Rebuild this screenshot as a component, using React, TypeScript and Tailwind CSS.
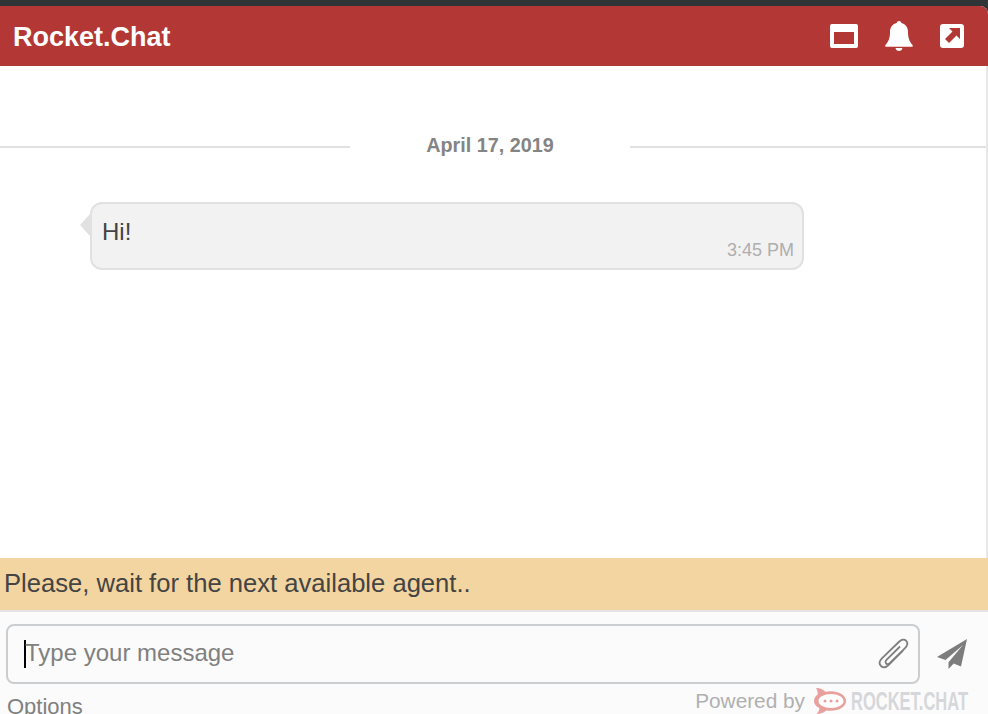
const PaperPlane = () => (
  <svg viewBox="0 0 32 32" className="h-[32px] w-[32px] fill-[#7d7d7d]">
    <path d="M31 1 1 19l8.5 3L27 7 12.5 24.2V31l5.2-5.6 7.3 3z" />
  </svg>
)

const Paperclip = () => (
  <svg viewBox="0 0 32 32" className="h-[32px] w-[32px] fill-none stroke-[#7f7f7f] stroke-[1.8]">
    <path d="M26 12.500 11.500 27c-2.600 2.600-5.600 2.900-7.500 1-2-2-1.700-5 .9-7.600L21.800 4c2.700-2.700 5.600-3 7.400-1.200 1.800 1.800 1.500 4.700-1.200 7.400L13 25c-1.300 1.300-2.800 1.500-3.800.5-1-1-.8-2.500.5-3.800L23 8.500" />
  </svg>
)

const BellIcon = () => (
  <svg viewBox="0 0 28 30" className="h-[30px] w-[28px] fill-white">
    <path d="M14 0c1.300 0 2.200.9 2.300 2.100C20.300 3 23 6.400 23 11c0 6 1.500 9.500 4.500 13 .6.700.3 1.800-.8 1.800H1.300c-1.100 0-1.400-1.100-.8-1.800C3.500 20.500 5 17 5 11c0-4.600 2.700-8 6.700-8.900C11.800.9 12.700 0 14 0z" />
    <path d="M10.500 27h7c-.3 1.800-1.800 3-3.500 3s-3.200-1.200-3.500-3z" />
  </svg>
)

const RocketLogo = () => (
  <svg viewBox="0 0 34 26" className="h-[26px] w-[34px]">
    <path
      d="M3 0c4 .2 7 1.500 9.500 3.800C14 3.400 15.700 3.200 17.500 3.200 26.500 3.200 33 7.500 33 13s-6.500 9.800-15.500 9.800c-1.500 0-3-.1-4.300-.4C11 24.500 7.500 26 3.500 26c1.800-1.500 2.800-3.500 3-5.700C3 18.300 1 15.800 1 13c0-2.600 1.500-5 3.800-6.800C4.800 4 4.200 2 3 0z"
      className="fill-[#e8a09c]"
    />
    <ellipse cx="18" cy="13" rx="12.500" ry="7" className="fill-white" />
    <circle cx="12" cy="13" r="1.500" className="fill-[#e8a09c]" />
    <circle cx="18" cy="13" r="1.500" className="fill-[#e8a09c]" />
    <circle cx="24" cy="13" r="1.500" className="fill-[#e8a09c]" />
  </svg>
)

export default function App() {
  return (
    <div className="flex h-[714px] w-[988px] flex-col overflow-hidden bg-[#2f3437] font-['Liberation_Sans',Arial,sans-serif]">
      <div className="mt-[6px] flex min-h-0 flex-1 flex-col overflow-hidden rounded-tr-[8px] bg-white">
        {/* Header */}
        <header className="flex h-[60px] shrink-0 items-center justify-between bg-[#b33735] pl-[13px] pr-[24px] text-white">
          <span className="pt-[2px] text-[27px] font-bold leading-none">Rocket.Chat</span>
          <div className="flex items-center">
            <div className="h-[24px] w-[28px] rounded-[2px] border-x-[4px] border-b-[4px] border-t-[8px] border-white" />
            <div className="ml-[27px] mr-[27px]">
              <BellIcon />
            </div>
            <svg viewBox="0 0 24 24" className="h-[24px] w-[24px]">
              <rect width="24" height="24" rx="3" className="fill-white" />
              <path d="M9 4h11v11l-3.500-3.500L9 19l-4-4 7.500-7.500z" className="fill-[#b33735]" />
            </svg>
          </div>
        </header>

        {/* Messages */}
        <main className="flex min-h-0 flex-1 flex-col border-r-2 border-[#e7e7e7]">
          <div className="mt-[68px] flex items-center">
            <div className="mt-[3px] h-[2px] w-[350px] bg-[#e1e1e1]" />
            <span className="w-[280px] text-center text-[19.8px] font-bold leading-[22px] text-[#848484]">April 17, 2019</span>
            <div className="mt-[3px] h-[2px] flex-1 bg-[#e1e1e1]" />
          </div>
          <div className="relative ml-[90px] mt-[46px] h-[68px] w-[714px] rounded-[12px] border-2 border-[#e1e1e1] bg-[#f2f2f2] pl-[10px] pt-[14px]">
            <div className="absolute left-[-12px] top-[10px] h-0 w-0 border-y-[11px] border-r-[10px] border-y-transparent border-r-[#e1e1e1]" />
            <p className="text-[24px] leading-[28px] text-[#444444]">Hi!</p>
            <span className="absolute bottom-[8px] right-[8px] text-[18px] leading-[20px] text-[#aeaeae]">3:45 PM</span>
          </div>
        </main>

        {/* Status */}
        <div className="flex h-[52px] shrink-0 items-center bg-[#f2d5a0] pb-[1px] pl-[4px] text-[25.6px] text-[#444444]">
          Please, wait for the next available agent..
        </div>

        {/* Composer */}
        <footer className="h-[104px] shrink-0 border-t-2 border-[#e4e4e4] bg-[#fbfbfb]">
          <div className="ml-[6px] mt-[12px] flex items-center">
            <div className="flex h-[60px] w-[914px] items-center justify-between rounded-[8px] border-2 border-[#cbced1] pl-[16px] pr-[9px]">
              <div className="flex items-center">
                <div className="h-[28px] w-[2px] bg-black" />
                <span className="ml-[-1px] pb-[2px] text-[24px] text-[#808080]">Type your message</span>
              </div>
              <Paperclip />
            </div>
            <div className="ml-[16px]">
              <PaperPlane />
            </div>
          </div>
          <div className="flex items-start justify-between pl-[7px] pr-[20px]">
            <span className="mt-[11px] text-[22px] leading-[24px] text-[#808080]">Options</span>
            <div className="mt-[2px] flex items-center">
              <span className="pt-[1px] text-[20.8px] leading-[28px] text-[#b0b0b0]">Powered by</span>
              <div className="ml-[8px]">
                <RocketLogo />
              </div>
              <div className="ml-[4px] w-[117px]">
                <span className="block origin-left scale-x-[0.66] whitespace-nowrap text-[25px] font-bold leading-[28px] text-[#d5d7da]">
                  ROCKET.CHAT
                </span>
              </div>
            </div>
          </div>
        </footer>
      </div>
    </div>
  )
}
